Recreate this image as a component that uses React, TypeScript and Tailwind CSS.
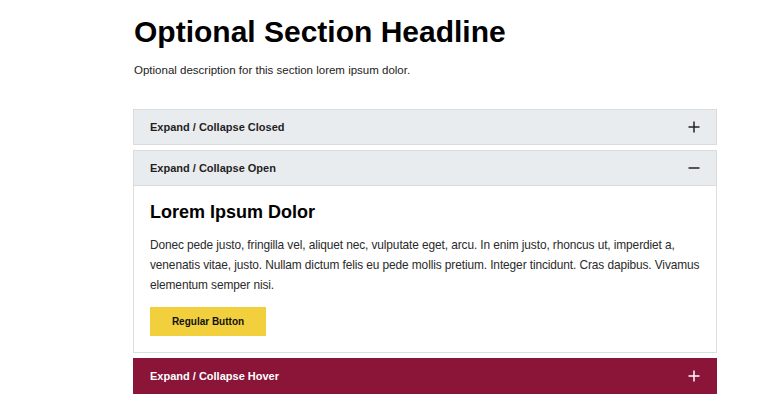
import React from "react";

type PanelState = "closed" | "open" | "hover";

function ToggleIcon({ open, light }: { open: boolean; light?: boolean }) {
  const stroke = light ? "#ffffff" : "#222222";
  return (
    <svg width="12" height="12" viewBox="0 0 12 12" aria-hidden="true">
      <path d="M0.5 6h11" stroke={stroke} strokeWidth="1.5" />
      {!open && <path d="M6 0.5v11" stroke={stroke} strokeWidth="1.5" />}
    </svg>
  );
}

function AccordionPanel({
  title,
  state,
  children,
  className = "",
}: {
  title: string;
  state: PanelState;
  children?: React.ReactNode;
  className?: string;
}) {
  const hover = state === "hover";
  const open = state === "open";
  return (
    <div className={className}>
      <button
        type="button"
        className={
          hover
            ? "flex h-[36px] w-full items-center justify-between border border-[#8a1538] bg-[#8a1538] px-4 text-left text-[11px] font-bold text-white"
            : "flex h-[36px] w-full items-center justify-between border border-[#d9dcdf] bg-[#e9ecef] px-4 text-left text-[11px] font-bold text-[#1f1f1f]"
        }
      >
        <span>{title}</span>
        <ToggleIcon open={open} light={hover} />
      </button>
      {open && (
        <div className="border-x border-b border-[#dcdfe2] bg-white pt-[14px] pr-3 pb-4 pl-4">{children}</div>
      )}
    </div>
  );
}

export default function App() {
  return (
    <div className="min-h-[415px] bg-white font-['Liberation_Sans',Arial,sans-serif] text-[#111]">
      <div className="ml-[133px] w-[584px] pt-[14px]">
        <h1 className="pl-px text-[30px] leading-[36px] font-bold text-black">Optional Section Headline</h1>
        <p className="mt-3 pl-px text-[11.5px] leading-[16px] text-[#222]">
          Optional description for this section lorem ipsum dolor.
        </p>

        <div className="mt-[31px]">
          <AccordionPanel title="Expand / Collapse Closed" state="closed" />
          <AccordionPanel title="Expand / Collapse Open" state="open" className="mt-[5px]">
            <h3 className="text-[18px] leading-[24px] font-bold text-black">Lorem Ipsum Dolor</h3>
            <p className="mt-[11px] text-[11.9px] leading-[20px] tracking-[-0.1px] text-[#2a2a2a]">
              Donec pede justo, fringilla vel, aliquet nec, vulputate eget, arcu. In enim justo, rhoncus ut, imperdiet a,
              venenatis vitae, justo. Nullam dictum felis eu pede mollis pretium. Integer tincidunt. Cras dapibus.
              Vivamus elementum semper nisi.
            </p>
            <button
              type="button"
              className="mt-3 h-[29px] w-[116px] bg-[#f2cf3d] text-[10px] font-bold text-[#111]"
            >
              Regular Button
            </button>
          </AccordionPanel>
          <AccordionPanel title="Expand / Collapse Hover" state="hover" className="mt-[5px]" />
        </div>
      </div>
    </div>
  );
}
